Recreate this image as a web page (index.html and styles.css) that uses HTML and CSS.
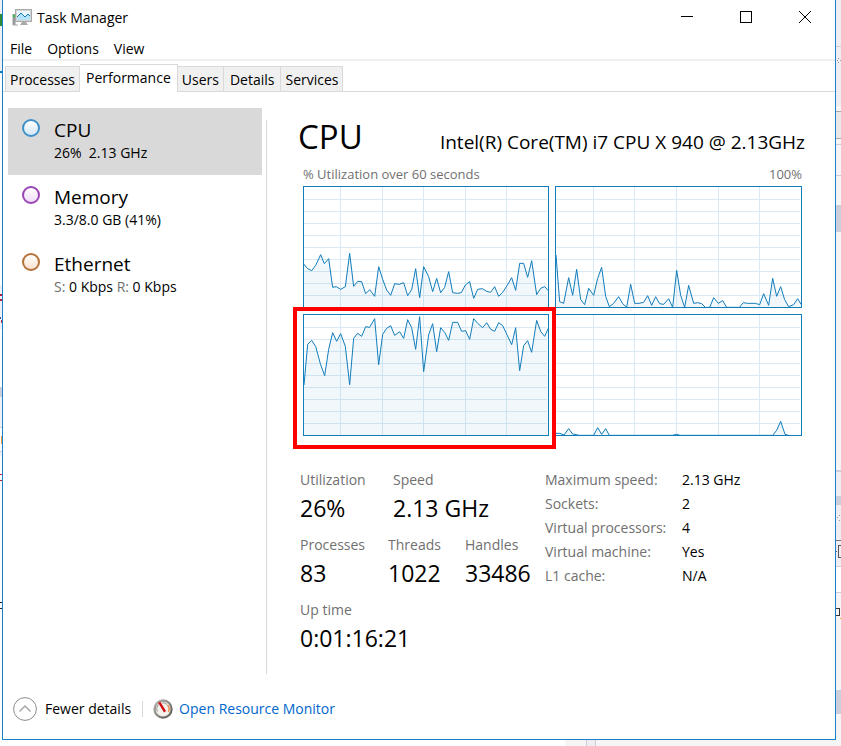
FILE: index.html
```
<!DOCTYPE html>
<html lang="en">
<head>
<meta charset="utf-8">
<title>Task Manager</title>
<link rel="stylesheet" href="styles.css">
</head>
<body>
<svg class="behind behind-left" viewBox="0 0 2 746" preserveAspectRatio="none" shape-rendering="crispEdges" aria-hidden="true">
  <rect width="2" height="72" fill="#f0f0f0"/>
  <rect y="14" width="2" height="12" fill="#2f8a35"/>
  <rect y="71" width="2" height="2" fill="#0a7ac0"/>
  <rect y="285" width="2" height="44" fill="#f0f0f4"/>
  <rect y="294" width="2" height="2" fill="#b02040"/><rect y="299" width="2" height="2" fill="#b02040"/>
  <rect y="317" width="1" height="2" fill="#4050b0"/><rect x="1" y="320" width="1" height="3" fill="#b03040"/>
  <rect y="387" width="2" height="10" fill="#cccedb"/>
  <rect y="397" width="2" height="30" fill="#f1f1f5"/>
  <rect y="427" width="2" height="1" fill="#cccedb"/>
  <rect x="1" y="436" width="1" height="8" fill="#e8a040"/>
  <rect y="451" width="2" height="1" fill="#cccedb"/>
  <rect y="452" width="2" height="4" fill="#f1f1f5"/>
  <rect y="474" width="2" height="1" fill="#c02030"/><rect y="480" width="2" height="1" fill="#c02030"/>
  <rect y="602" width="2" height="1" fill="#222"/><rect y="608" width="2" height="1" fill="#222"/>
</svg>

<div class="window">
  <header class="titlebar">
    <svg class="app-icon" width="20" height="18" viewBox="0 0 20 18" aria-hidden="true">
      <rect x=".5" y="5" width="3" height="11" fill="#9a9a9a"/>
      <rect x="1" y="6" width="2" height="2" fill="#2fc32f"/>
      <path d="M1 16h5" stroke="#a5a5a5"/>
      <rect x="3.5" y=".5" width="16" height="12" fill="#d4d4d4" stroke="#a9a9a9"/>
      <rect x="5" y="2" width="13" height="9" fill="#e9f7fd"/>
      <path d="M5 8l4-4 4 4 3-3 2 2v4H5z" fill="#b5e3f7"/>
      <path d="M5 8l4-4 4 4 3-3 2 2" fill="none" stroke="#1b78b4"/>
      <path d="M10 13h4l2 3H8z" fill="#a9a9a9"/>
    </svg>
    <h1>Task Manager</h1>
    <div class="caption-buttons">
      <button type="button" aria-label="Minimize"><svg width="12" height="12" viewBox="0 0 12 12" shape-rendering="crispEdges"><path d="M0 5.500h12"/></svg></button>
      <button type="button" aria-label="Maximize"><svg width="12" height="12" viewBox="0 0 12 12" shape-rendering="crispEdges"><path d="M.5.5h11v11H.5z"/></svg></button>
      <button type="button" aria-label="Close"><svg width="12" height="12" viewBox="0 0 12 12"><path d="M0 0l12 12M12 0L0 12"/></svg></button>
    </div>
  </header>

  <nav class="menubar" aria-label="Menu">
    <button type="button">File</button>
    <button type="button">Options</button>
    <button type="button">View</button>
  </nav>

  <div class="tabs" role="tablist">
    <button type="button" role="tab">Processes</button>
    <button type="button" role="tab" aria-selected="true">Performance</button>
    <button type="button" role="tab">Users</button>
    <button type="button" role="tab" class="wide">Details</button>
    <button type="button" role="tab">Services</button>
  </div>

  <main class="content">
    <aside class="resources">
      <button type="button" class="resource cpu selected"><span class="dot"></span><span class="name">CPU</span><span class="value">26%&nbsp; 2.13 GHz</span></button>
      <button type="button" class="resource memory"><span class="dot"></span><span class="name">Memory</span><span class="value">3.3/8.0 GB (41%)</span></button>
      <button type="button" class="resource ethernet"><span class="dot"></span><span class="name">Ethernet</span><span class="value"><i>S:</i> 0 Kbps <i>R:</i> 0 Kbps</span></button>
    </aside>

    <section class="panel">
      <div class="panel-head"><h2>CPU</h2><p>Intel(R) Core(TM) i7 CPU X 940 @ 2.13GHz</p></div>
      <div class="scale"><span>% Utilization over 60 seconds</span><span>100%</span></div>

      <div class="charts">
        <div class="chart">
          <svg viewBox="39 18 738 366" preserveAspectRatio="none" role="img" aria-label="Processor 0">
            <path class="grid" d="M151.500 18v366M277.500 18v366M400.500 18v366M526.500 18v366M649.500 18v366M39 58.500h732M39 94.500h732M39 130.500h732M39 166.500h732M39 202.500h732M39 238.500h732M39 274.500h732M39 310.500h732M39 346.500h732"/>
            <path class="area" d="M41 252L53 266L65 272L77 256L92 224L103 251L116 236L128 322L139 320L152 328L166 320L179 220L191 319L203 304L215 305L227 341L239 329L254 349L266 260L278 298L290 330L302 346L314 311L328 313L341 308L353 347L365 329L377 266L389 353L401 260L416 290L428 335L440 295L452 338L464 322L476 275L488 338L503 340L514 338L526 315L539 305L551 355L563 328L577 326L590 334L602 337L614 320L626 349L638 337L651 317L665 293L677 331L689 250L701 250L713 292L725 242L740 344L752 325L764 320L775 332V384H41Z"/>
            <path class="line" d="M41 252L53 266L65 272L77 256L92 224L103 251L116 236L128 322L139 320L152 328L166 320L179 220L191 319L203 304L215 305L227 341L239 329L254 349L266 260L278 298L290 330L302 346L314 311L328 313L341 308L353 347L365 329L377 266L389 353L401 260L416 290L428 335L440 295L452 338L464 322L476 275L488 338L503 340L514 338L526 315L539 305L551 355L563 328L577 326L590 334L602 337L614 320L626 349L638 337L651 317L665 293L677 331L689 250L701 250L713 292L725 242L740 344L752 325L764 320L775 332"/>
          </svg>
        </div>
        <div class="chart">
          <svg viewBox="15 18 741 366" preserveAspectRatio="none" role="img" aria-label="Processor 1">
            <path class="grid" d="M130.500 18v366M253.500 18v366M379.500 18v366M505.500 18v366M628.500 18v366M15 58.500h735M15 94.500h735M15 130.500h735M15 166.500h735M15 202.500h735M15 238.500h735M15 274.500h735M15 310.500h735M15 346.500h735"/>
            <path class="area" d="M18 225L29 365L41 370L56 293L68 346L80 268L92 358L104 374L116 325L131 346L143 295L155 262L167 349L178 380L190 371L206 350L218 371L230 382L242 313L254 370L267 370L281 367L293 347L305 376L317 350L329 371L341 373L356 356L368 382L380 271L392 346L404 382L416 316L431 370L443 368L455 371L466 382H479L491 353L505 370L518 362L530 382H568L580 368L592 370L616 370L629 374L641 341L656 376L668 295L680 349L692 320L704 359L716 380L731 374L743 356L754 374V384H18Z"/>
            <path class="line" d="M18 225L29 365L41 370L56 293L68 346L80 268L92 358L104 374L116 325L131 346L143 295L155 262L167 349L178 380L190 371L206 350L218 371L230 382L242 313L254 370L267 370L281 367L293 347L305 376L317 350L329 371L341 373L356 356L368 382L380 271L392 346L404 382L416 316L431 370L443 368L455 371L466 382H479L491 353L505 370L518 362L530 382H568L580 368L592 370L616 370L629 374L641 341L656 376L668 295L680 349L692 320L704 359L716 380L731 374L743 356L754 374"/>
          </svg>
        </div>
        <div class="chart highlighted">
          <svg viewBox="39 27 738 366" preserveAspectRatio="none" role="img" aria-label="Processor 2">
            <path class="grid" d="M151.500 27v366M277.500 27v366M400.500 27v366M526.500 27v366M649.500 27v366M39 67.500h732M39 103.500h732M39 139.500h732M39 175.500h732M39 211.500h732M39 247.500h732M39 283.500h732M39 319.500h732M39 355.500h732"/>
            <path class="area" d="M42 240L53 118L65 106L77 124L91 176L104 212L116 133L128 83L140 109L152 86L166 124L179 239L191 100L203 85L215 94L227 65L239 67L254 41L266 179L278 88L290 70L302 62L314 91L329 80L341 100L353 44L365 68L377 133L389 35L401 200L416 89L428 56L440 140L452 68L464 82L476 106L488 52L503 52L515 79L527 77L539 103L551 41L563 55L578 68L590 53L602 73L614 79L626 53L638 62L652 91L665 119L677 68L689 197L701 122L713 107L725 142L740 46L752 79L764 94L775 70V393H42Z"/>
            <path class="line" d="M42 240L53 118L65 106L77 124L91 176L104 212L116 133L128 83L140 109L152 86L166 124L179 239L191 100L203 85L215 94L227 65L239 67L254 41L266 179L278 88L290 70L302 62L314 91L329 80L341 100L353 44L365 68L377 133L389 35L401 200L416 89L428 56L440 140L452 68L464 82L476 106L488 52L503 52L515 79L527 77L539 103L551 41L563 55L578 68L590 53L602 73L614 79L626 53L638 62L652 91L665 119L677 68L689 197L701 122L713 107L725 142L740 46L752 79L764 94L775 70"/>
          </svg>
        </div>
        <div class="chart">
          <svg viewBox="15 27 741 366" preserveAspectRatio="none" role="img" aria-label="Processor 3">
            <path class="grid" d="M130.500 27v366M253.500 27v366M379.500 27v366M505.500 27v366M628.500 27v366M15 67.500h735M15 103.500h735M15 139.500h735M15 175.500h735M15 211.500h735M15 247.500h735M15 283.500h735M15 319.500h735M15 355.500h735"/>
            <path class="area" d="M18 385H30L42 390L56 371L68 387L88 391H131L143 368L155 388L167 371L178 391H367L379 388L391 391H668L680 376L692 349L705 388L716 391V393H18Z"/>
            <path class="line" d="M18 385H30L42 390L56 371L68 387L88 391H131L143 368L155 388L167 371L178 391H367L379 388L391 391H668L680 376L692 349L705 388L716 391"/>
          </svg>
        </div>
      </div>

      <div class="details">
        <div class="stats">
          <dl class="row first"><div><dt>Utilization</dt><dd>26%</dd></div><div><dt>Speed</dt><dd>2.13 GHz</dd></div></dl>
          <dl class="row second"><div><dt>Processes</dt><dd>83</dd></div><div><dt>Threads</dt><dd>1022</dd></div><div><dt>Handles</dt><dd>33486</dd></div></dl>
          <dl class="row"><div><dt>Up time</dt><dd>0:01:16:21</dd></div></dl>
        </div>
        <table class="specs">
          <tr><th scope="row">Maximum speed:</th><td>2.13 GHz</td></tr>
          <tr><th scope="row">Sockets:</th><td>2</td></tr>
          <tr><th scope="row">Virtual processors:</th><td>4</td></tr>
          <tr><th scope="row">Virtual machine:</th><td>Yes</td></tr>
          <tr><th scope="row">L1 cache:</th><td>N/A</td></tr>
        </table>
      </div>
    </section>
  </main>

  <footer class="statusbar">
    <button type="button" class="fewer">
      <svg width="24" height="24" viewBox="0 0 24 24" fill="none" aria-hidden="true"><circle cx="12" cy="12" r="11.400" stroke="#8c8c8c"/><path d="M6.500 14.500l5.500-5.500 5.500 5.500" stroke="#a8a8a8" stroke-width="1.500"/></svg>
      Fewer details
    </button>
    <a href="#resource-monitor">
      <svg width="20" height="20" viewBox="0 0 20 20" aria-hidden="true">
        <defs><linearGradient id="rim" x2="1" y2="1"><stop stop-color="#c8c8c8"/><stop offset="1" stop-color="#484440"/></linearGradient></defs>
        <circle cx="10" cy="10" r="9.700" fill="url(#rim)"/>
        <circle cx="10" cy="10" r="7.800" fill="#f4f1ec" stroke="#85817b" stroke-width=".7"/>
        <path d="M4.500 12.500a6 6 0 0 1 1-7M9 4a6 6 0 0 1 5 1.500" fill="none" stroke="#aaa" stroke-width="1.200"/>
        <path d="M14.500 6a6 6 0 0 1 .8 7" fill="none" stroke="#ed8b50" stroke-width="1.500"/>
        <path d="M5 3.500l2.500-.5 5.500 9-2 1.500z" fill="#d30c12"/>
      </svg>
      <span>Open Resource Monitor</span>
    </a>
  </footer>
</div>

<svg class="behind behind-right" viewBox="0 0 5 746" preserveAspectRatio="none" shape-rendering="crispEdges" aria-hidden="true">
  <rect width="5" height="746" fill="#f5f5f5"/>
  <rect width="5" height="106" fill="#eeeef2"/>
  <rect y="46" width="5" height="1" fill="#cccedb"/>
  <path d="M2 58h1v1H2zM1 60h1v1H1zM4 60h1v1H4zM2 62h1v1H2z" fill="#999"/>
  <rect y="111" width="5" height="28" fill="#a5a5a5"/><rect y="112" width="5" height="26" fill="#e8e8e8"/>
  <rect y="144" width="5" height="1" fill="#cccedb"/><rect y="175" width="5" height="1" fill="#cccedb"/>
  <rect y="205" width="5" height="27" fill="#cccedb"/>
  <rect y="470" width="5" height="2" fill="#cccedb"/>
  <rect y="472" width="5" height="94" fill="#eeeef2"/>
  <rect y="496" width="5" height="9" fill="#cccedb"/>
  <path d="M1 517h1v1H1zM3 515h1v1H3zM3 520h1v1H3z" fill="#999"/>
  <rect y="540" width="5" height="1" fill="#777"/>
  <path d="M5 545.500H2.500v12H5M0 551.500h1" fill="none" stroke="#555"/>
  <rect y="566" width="5" height="27" fill="#cccedb"/><rect y="567" width="5" height="25" fill="#fff"/>
  <path d="M0 608.500h3.500v6.500H0" fill="none" stroke="#333"/>
  <rect x="4" y="618" width="1" height="1" fill="#f0a030"/>
  <rect y="690" width="5" height="24" fill="#cccedb"/>
</svg>
<div class="behind-bottom"></div>
</body>
</html>
```
FILE: styles.css
```
* { box-sizing: border-box; }

body {
  margin: 0;
  min-height: 100vh;
  display: grid;
  grid-template-columns: 2px minmax(0, 1fr) 5px;
  grid-template-rows: minmax(0, 1fr) 6px;
  background: #fff;
  color: #000;
  font: 14px/20px "Open Sans", "Noto Sans", sans-serif;
}

h1, h2, p, dl, dd { margin: 0; font-weight: 400; }
button { margin: 0; padding: 0; border: 0; background: none; color: inherit; font: inherit; text-align: left; }

.behind { width: 100%; height: 100%; min-height: 0; grid-row: 1 / 3; display: block; }
.behind-left { grid-column: 1; }
.behind-right { grid-column: 3; }
.behind-bottom {
  grid-column: 2;
  grid-row: 2;
  background: linear-gradient(90deg, #fff 563px, #f5f5f5 563px 584px, #cccedb 584px 585px, #eeeef2 585px 593px, #cccedb 593px 594px, #f5f5f5 594px);
}

.window {
  grid-column: 2;
  grid-row: 1;
  display: flex;
  flex-direction: column;
  background: #fff;
  border: 1px solid #1a80cc;
  border-top: 0;
}

.titlebar { display: flex; align-items: center; height: 36px; padding: 0 1px 0 9px; }
.titlebar h1 { flex: 1; margin-left: 5px; font-size: 14px; }
.caption-buttons { display: flex; }
.caption-buttons button { width: 59px; height: 36px; padding-bottom: 2px; display: grid; place-items: center; }
.caption-buttons svg { fill: none; stroke: #000; }

.menubar { display: flex; gap: 15px; height: 25px; padding: 3px 7px 0; border-bottom: 2px solid #f0f0f0; }

.tabs { display: flex; align-items: flex-end; height: 31px; padding-left: 2px; border-bottom: 1px solid #d9d9d9; }
.tabs button {
  height: 25px;
  padding: 2px 4px 0;
  border: 1px solid #d9d9d9;
  border-width: 1px 1px 0 0;
  background: #f0f0f0;
}
.tabs button:first-child { border-left-width: 1px; }
.tabs .wide { padding: 2px 6px 0; }
.tabs [aria-selected] { height: 28px; margin-bottom: -1px; padding: 0 6px 2px; background: #fff; }

.content { flex: 1; display: flex; padding: 16px 30px 0 5px; }

.resources { flex: 0 0 254px; }
.resource {
  display: grid;
  grid-template-columns: 32px 1fr;
  width: 100%;
  height: 67px;
  padding: 10px 14px;
  align-content: start;
}
.selected { background: #d9d9d9; }
.dot { width: 18px; height: 18px; margin-top: 1px; border: 2px solid; border-radius: 50%; }
.cpu .dot { border-color: #3f92c8; background: linear-gradient(#fff, #d3e7f5); }
.memory .dot { border-color: #9a44b5; background: linear-gradient(#fff, #f1dcf8); }
.ethernet .dot { border-color: #b5733a; background: linear-gradient(#fff, #fbe3d0); }
.name { font-size: 19px; line-height: 24px; }
.value { grid-column: 2; line-height: 22px; }
.value i { color: #707070; font-style: normal; }

.panel { flex: 1; min-width: 0; margin: 12px 0 0 4px; padding-left: 31px; border-left: 1px solid #d9d9d9; }
.panel-head { display: flex; align-items: baseline; justify-content: space-between; height: 46px; line-height: 34px; }
.panel-head h2 { font-size: 33px; }
.panel-head p { font-size: 19px; }
.scale { display: flex; justify-content: space-between; padding: 0 3px 0 5px; height: 20px; line-height: 16px; font-size: 13px; color: #707070; }

.charts { display: grid; grid-template-columns: 246fr 247fr; gap: 6px; margin: 0 3px 0 5px; }
.chart { position: relative; height: 122px; }
.chart::before { content: ""; position: absolute; inset: 0; border: 1px solid #117dbb; }
.chart svg { display: block; width: 100%; height: 122px; }
.chart path { vector-effect: non-scaling-stroke; fill: none; }
.chart .grid { stroke: #d9eaf4; shape-rendering: crispEdges; }
.chart .area { fill: #117dbb; fill-opacity: .06; }
.chart .line { stroke: #117dbb; }
.highlighted::after { content: ""; position: absolute; z-index: 1; inset: -7px -7px -13px -10px; border: 4px solid #f00; }

.details { display: flex; justify-content: space-between; padding: 34px 33px 0 2px; }
.row { display: flex; height: 65px; }
.first div:first-child { width: 93px; }
.second div:nth-child(1) { width: 88px; }
.second div:nth-child(2) { width: 77px; }
dt, th { color: #707070; font-weight: 400; text-align: left; }
dd { font-size: 23px; line-height: 36px; white-space: nowrap; }
.specs { border-collapse: collapse; height: 120px; }
.specs th, .specs td { height: 24px; padding: 0; line-height: 20px; vertical-align: top; white-space: nowrap; }
.specs th { width: 137px; }
.specs td { width: 90px; }

.statusbar { display: flex; align-items: center; height: 65px; padding: 4px 10px 0; }
.fewer { display: flex; align-items: center; gap: 8px; }
.statusbar a { display: flex; align-items: center; gap: 6px; margin-left: 11px; color: #0066cc; text-decoration: none; }
.statusbar a::before { content: ""; width: 1px; height: 16px; margin-right: 4px; background: #d9d9d9; }
```
